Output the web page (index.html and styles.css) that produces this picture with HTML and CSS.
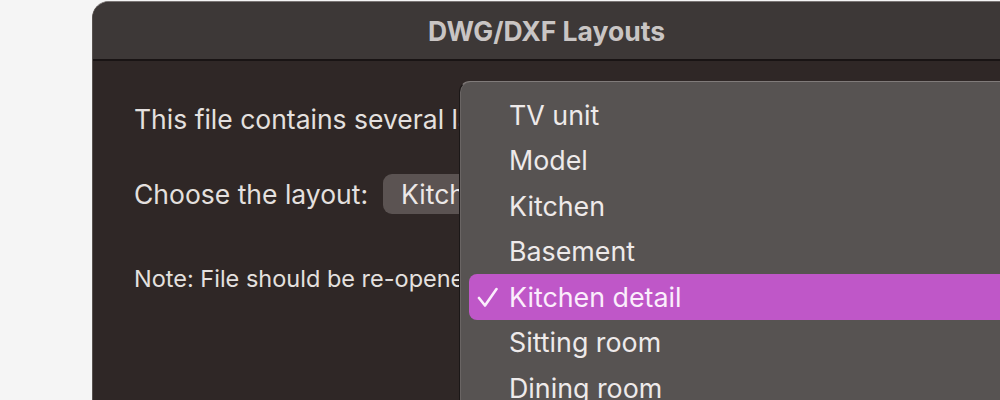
FILE: index.html
```html
<!DOCTYPE html>
<html lang="en">
<head>
  <meta charset="UTF-8">
  <title>DWG/DXF Layouts</title>
  <link rel="stylesheet" href="styles.css">
</head>
<body>
  <div class="window">
    <div class="titlebar">DWG/DXF Layouts</div>
    <div class="content">
      <p class="intro">This file contains several layouts.</p>
      <div class="choose-row">
        <span class="label">Choose the layout:</span>
        <div class="popup">Kitchen detail</div>
      </div>
      <p class="note">Note: File should be re-opened to switch layouts.</p>
    </div>
    <div class="menu">
      <div class="menu-item">TV unit</div>
      <div class="menu-item">Model</div>
      <div class="menu-item">Kitchen</div>
      <div class="menu-item">Basement</div>
      <div class="menu-item selected">
        <span class="check">
          <svg width="21" height="21" viewBox="0 0 21 21"><polyline points="2,11 8,18.5 19.5,2" fill="none" stroke="#fbeefc" stroke-width="2.6" stroke-linecap="round" stroke-linejoin="round"/></svg>
        </span>Kitchen detail
      </div>
      <div class="menu-item">Sitting room</div>
      <div class="menu-item">Dining room</div>
    </div>
  </div>
</body>
</html>
```

FILE: styles.css
```css
body {
  margin: 0;
  background: #f5f5f5;
  font-family: Inter, "Noto Sans", sans-serif;
  overflow: hidden;
  height: 400px;
}
.window {
  position: relative;
  box-sizing: border-box;
  margin: 1px 0 0 92px;
  width: 908px;
  height: 399px;
  background: #2f2726;
  border-radius: 17px 0 0 0;
  border-left: 1px solid #58524f;
  border-top: 1px solid #7a7574;
  overflow: hidden;
}
.titlebar {
  height: 57px;
  background: #3d3837;
  border-bottom: 2px solid #191414;
  color: #c9c5c4;
  font-size: 26.5px;
  font-weight: 700;
  display: flex;
  align-items: center;
  justify-content: center;
}
.content {
  padding: 41px 0 0 41px;
  color: #e4e0df;
  white-space: nowrap;
}
.intro {
  margin: 0;
  font-size: 26.5px;
  line-height: 34px;
}
.choose-row {
  display: flex;
  align-items: center;
  gap: 15px;
  margin-top: 38px;
}
.label {
  font-size: 26.5px;
}
.popup {
  background: #5b5352;
  border-radius: 9px;
  height: 40px;
  padding: 0 18px;
  display: flex;
  align-items: center;
  font-size: 26.5px;
  color: #ece8e7;
}
.note {
  margin: 50px 0 0;
  font-size: 23.5px;
  color: #e4e0df;
}
.menu {
  position: absolute;
  left: 366px;
  top: 79px;
  width: 541px;
  height: 320px;
  background: #575352;
  border-radius: 11px 0 0 0;
  border-top: 1px solid #807b7a;
  border-left: 1px solid #1b1717;
  box-shadow: 1px 0 0 #6a6564 inset;
  padding: 10px 0 0 9px;
}
.menu-item {
  height: 45.5px;
  display: flex;
  align-items: center;
  padding-left: 40px;
  font-size: 26.8px;
  color: #eeeaea;
}
.menu-item.selected {
  padding-left: 0;
  background: #bf57c8;
  border-radius: 8px 0 0 8px;
  color: #fbeefc;
}
.check {
  box-sizing: border-box;
  width: 40px;
  padding: 2px 0 0 8px;
  display: flex;
  align-items: center;
}
```
